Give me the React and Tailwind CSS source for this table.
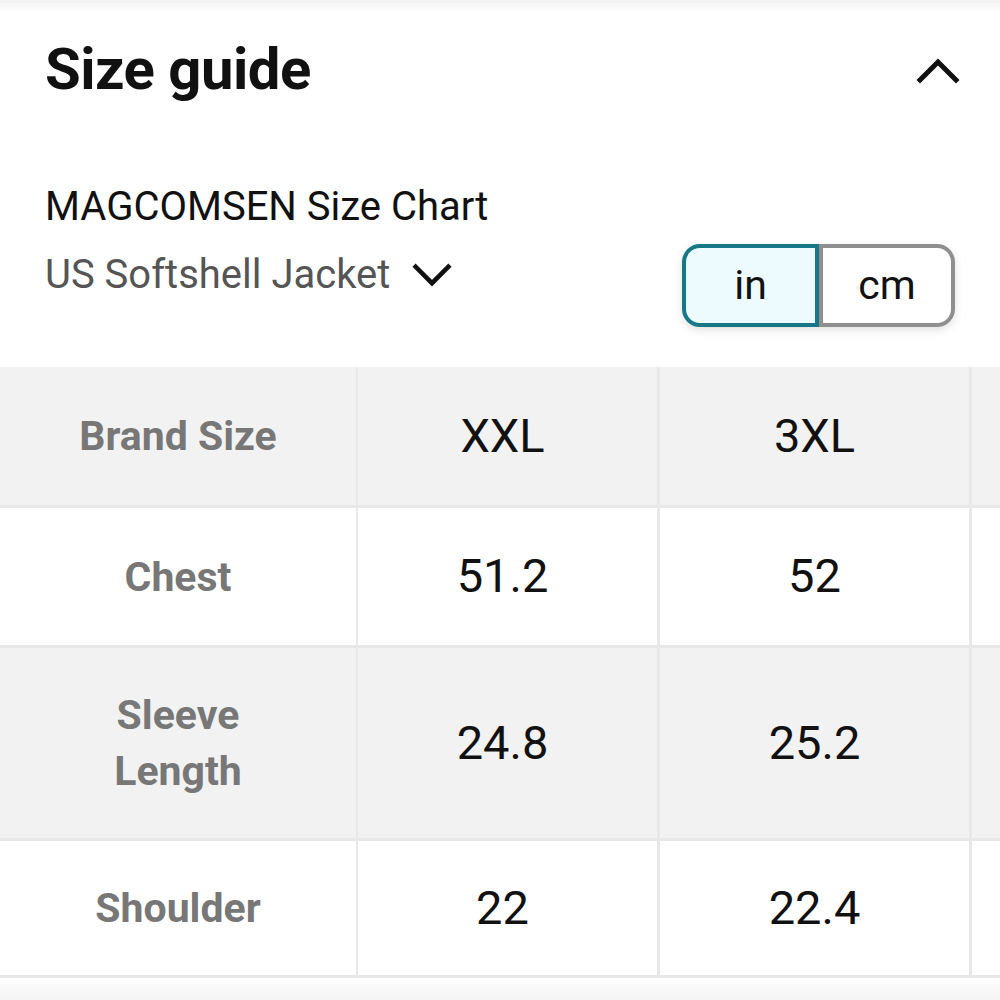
import React from 'react'

const rows = [
  { label: ['Brand Size'], values: ['XXL', '3XL'], shade: true, h: 'h-[138px]' },
  { label: ['Chest'], values: ['51.2', '52'], shade: false, h: 'h-[140px]' },
  { label: ['Sleeve', 'Length'], values: ['24.8', '25.2'], shade: true, h: 'h-[193px]' },
  { label: ['Shoulder'], values: ['22', '22.4'], shade: false, h: 'h-[137px]' },
]

const Chevron = ({ up, className }) => (
  <svg viewBox="0 0 44 26" className={className} fill="none" stroke="#111" strokeWidth="5" strokeLinecap="square">
    {up ? <path d="M4 23 L22 5 L40 23" /> : <path d="M4 4 L22 22 L40 4" />}
  </svg>
)

const App = () => {
  return (
    <div className="w-[1000px] h-[1000px] bg-white overflow-hidden font-['Roboto',sans-serif] flex flex-col">
      <div className="h-[12px] bg-gradient-to-b from-[#f1f1f1] to-white" />

      {/* header */}
      <div className="flex items-center justify-between pl-[45px] pr-[40px] h-[115px]">
        <h2 className="text-[58px] font-bold text-[#111] tracking-[-0.5px]">Size guide</h2>
        <Chevron up className="w-[44px] h-[28px]" />
      </div>

      {/* chart name + unit toggle */}
      <div className="flex items-end justify-between pl-[45px] pr-[45px] h-[240px] pb-[40px]">
        <div className="flex flex-col">
          <div className="text-[40px] text-[#111] leading-[48px]">MAGCOMSEN Size Chart</div>
          <div className="flex items-center gap-[22px] mt-[20px] mb-[28px]">
            <span className="text-[40px] text-[#555] leading-[48px]">US Softshell Jacket</span>
            <Chevron className="w-[40px] h-[24px]" />
          </div>
        </div>
        <div className="flex h-[83px] rounded-[18px] shadow-[0_3px_8px_rgba(0,0,0,0.12)]">
          <div className="w-[137px] flex items-center justify-center border-[4px] border-[#167786] bg-[#edfbfe] rounded-l-[18px] text-[41px] text-[#111]">in</div>
          <div className="w-[136px] flex items-center justify-center border-[4px] border-[#8f8f8f] bg-white rounded-r-[18px] text-[41px] text-[#111]">cm</div>
        </div>
      </div>

      {/* table */}
      <div className="flex flex-col border-b-[3px] border-[#e8e8e8]">
        {rows.map((row, i) => (
          <div
            key={i}
            className={`flex ${row.h} ${row.shade ? 'bg-[#f2f2f2]' : 'bg-white'} ${i > 0 ? 'border-t-[3px] border-[#e8e8e8]' : ''}`}
          >
            <div className="w-[358px] flex flex-col items-center justify-center border-r-[2px] border-[#e8e8e8] text-[41px] font-bold text-[#777] leading-[56px]">
              {row.label.map((l) => (
                <span key={l}>{l}</span>
              ))}
            </div>
            <div className="w-[302px] flex items-center justify-center pr-[10px] border-r-[3px] border-[#e8e8e8] text-[47px] text-[#111]">
              {row.values[0]}
            </div>
            <div className="w-[312px] flex items-center justify-center border-r-[3px] border-[#e8e8e8] text-[47px] text-[#111]">
              {row.values[1]}
            </div>
            <div className="flex-1" />
          </div>
        ))}
      </div>

      <div className="flex-1 bg-gradient-to-b from-white to-[#f3f3f3]" />
    </div>
  )
}

export default App
